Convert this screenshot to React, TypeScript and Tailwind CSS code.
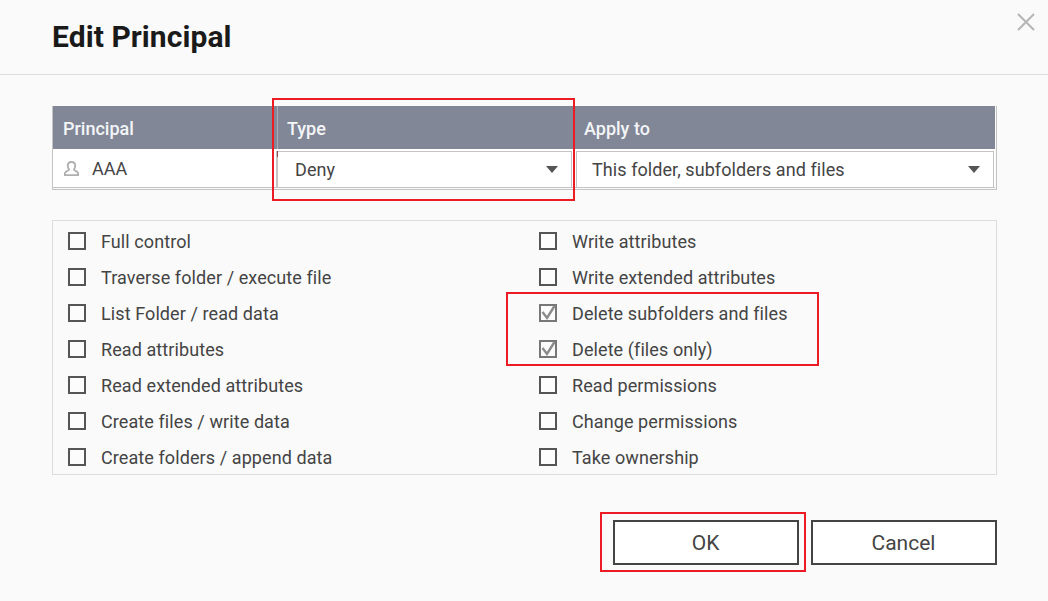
const left = [
  "Full control",
  "Traverse folder / execute file",
  "List Folder / read data",
  "Read attributes",
  "Read extended attributes",
  "Create files / write data",
  "Create folders / append data",
];
const right = [
  "Write attributes",
  "Write extended attributes",
  "Delete subfolders and files",
  "Delete (files only)",
  "Read permissions",
  "Change permissions",
  "Take ownership",
];
const checkedLabels = ["Delete subfolders and files", "Delete (files only)"];

function Perm({ label }: { label: string }) {
  const checked = checkedLabels.includes(label);
  return (
    <div className="flex h-9 items-center">
      <span className={`relative h-[18px] w-[18px] shrink-0 border-2 ${checked ? "border-[#777]" : "border-[#555]"} bg-[#fcfcfc]`}>
        {checked && (
          <svg viewBox="0 0 18 18" className="absolute -left-[2px] -top-[2px] h-[18px] w-[18px]" fill="none">
            <path d="M3.5 8 L8 14 L15.5 2" stroke="#8a8a8a" strokeWidth="2.4" />
          </svg>
        )}
      </span>
      <span className="ml-[15px] pt-[2px] text-[18px] leading-none tracking-[0.09px] text-[#444]">{label}</span>
    </div>
  );
}

function Select({ value, className }: { value: string; className: string }) {
  return (
    <div className={`flex h-[37px] items-center justify-between border-y border-r border-[#c4c4c4] bg-white text-[18px] tracking-[0.07px] text-[#444] ${className}`}>
      <span>{value}</span>
      <span className="h-0 w-0 border-x-[6px] border-t-[7px] border-x-transparent border-t-[#555]" />
    </div>
  );
}

function RedBox({ className }: { className: string }) {
  return <div className={`pointer-events-none absolute border-2 border-[#ed1c24] ${className}`} />;
}

export default function App() {
  return (
    <div className="relative h-[601px] w-[1048px] overflow-hidden bg-[#fafafa] font-['Roboto',sans-serif]">
      <div className="flex h-[75px] items-center justify-between border-b border-[#dddddd] pl-[52px]">
        <h1 className="text-[30px] font-bold leading-none tracking-[0.07px] text-[#1a1a1a]">Edit Principal</h1>
      </div>
      <svg viewBox="0 0 18 18" className="absolute left-[1017px] top-[13px] h-[18px] w-[18px]" fill="none">
        <path d="M1 1 L17 17 M17 1 L1 17" stroke="#b5b5b5" strokeWidth="2" />
      </svg>

      <div className="mx-[52px] mt-[31px] h-[84px] w-[945px] border-x border-b border-[#c4c4c4] pb-[1px] pr-[1px]">
        <div className="flex h-[43px] items-center bg-[#818797] text-[18px] font-medium text-[#f4f5f7]">
          <div className="h-full w-[224px] pl-[10px] leading-[45px]">Principal</div>
          <div className="h-full w-[298px] border-l border-[#a9aeba] pl-[9px] leading-[45px]">Type</div>
          <div className="h-full flex-1 pl-[9px] leading-[45px]">Apply to</div>
        </div>
        <div className="flex h-[39px] border-b border-[#c4c4c4] bg-white">
          <div className="flex w-[223px] items-center pl-[11px] text-[18px] text-[#444]">
            <svg viewBox="0 0 16 16" className="h-[15px] w-[15px]" fill="none">
              <path d="M5.4 9 C4.2 7.8 4 6.4 4 5 C4 2.4 5.6 1 8 1 C10.4 1 12 2.4 12 5 C12 6.4 11.8 7.8 10.6 9 C10.4 10.4 15 10.6 15 13 L15 15 L1 15 L1 13 C1 10.6 5.6 10.4 5.4 9 Z" stroke="#b0b0b0" strokeWidth="2" />
            </svg>
            <span className="ml-[13px]">AAA</span>
          </div>
          <div className="w-[299px] pt-[2px]">
            <Select value="Deny" className="w-[296px] border-l-2 pl-[17px] pr-[13px]" />
          </div>
          <div className="flex-1 pl-[1px] pt-[2px]">
            <Select value="This folder, subfolders and files" className="w-[418px] border-l pl-[15px] pr-[13px]" />
          </div>
        </div>
      </div>

      <div className="mx-[52px] mt-[30px] grid h-[255px] w-[945px] grid-cols-[471px_1fr] border border-[#dddddd] pl-[15px] pt-[2px]">
        <div>
          {left.map((l) => <Perm key={l} label={l} />)}
        </div>
        <div>
          {right.map((l) => <Perm key={l} label={l} />)}
        </div>
      </div>

      <div className="mt-[45px] flex w-[997px] justify-end gap-[12px]">
        <button className="h-[45px] w-[186px] border-2 border-[#444] bg-white pr-[1px] pt-[2px] text-[21px] text-[#444]">OK</button>
        <button className="h-[45px] w-[186px] border-2 border-[#444] bg-white pr-[1px] pt-[2px] text-[21px] text-[#444]">Cancel</button>
      </div>

      <div className="absolute left-[277px] top-[151px] h-[6px] w-px bg-[#8a4a50]" />
      <RedBox className="left-[272px] top-[98px] h-[103px] w-[303px]" />
      <RedBox className="left-[506px] top-[292px] h-[74px] w-[313px]" />
      <RedBox className="left-[600px] top-[512px] h-[60px] w-[206px]" />
    </div>
  );
}
